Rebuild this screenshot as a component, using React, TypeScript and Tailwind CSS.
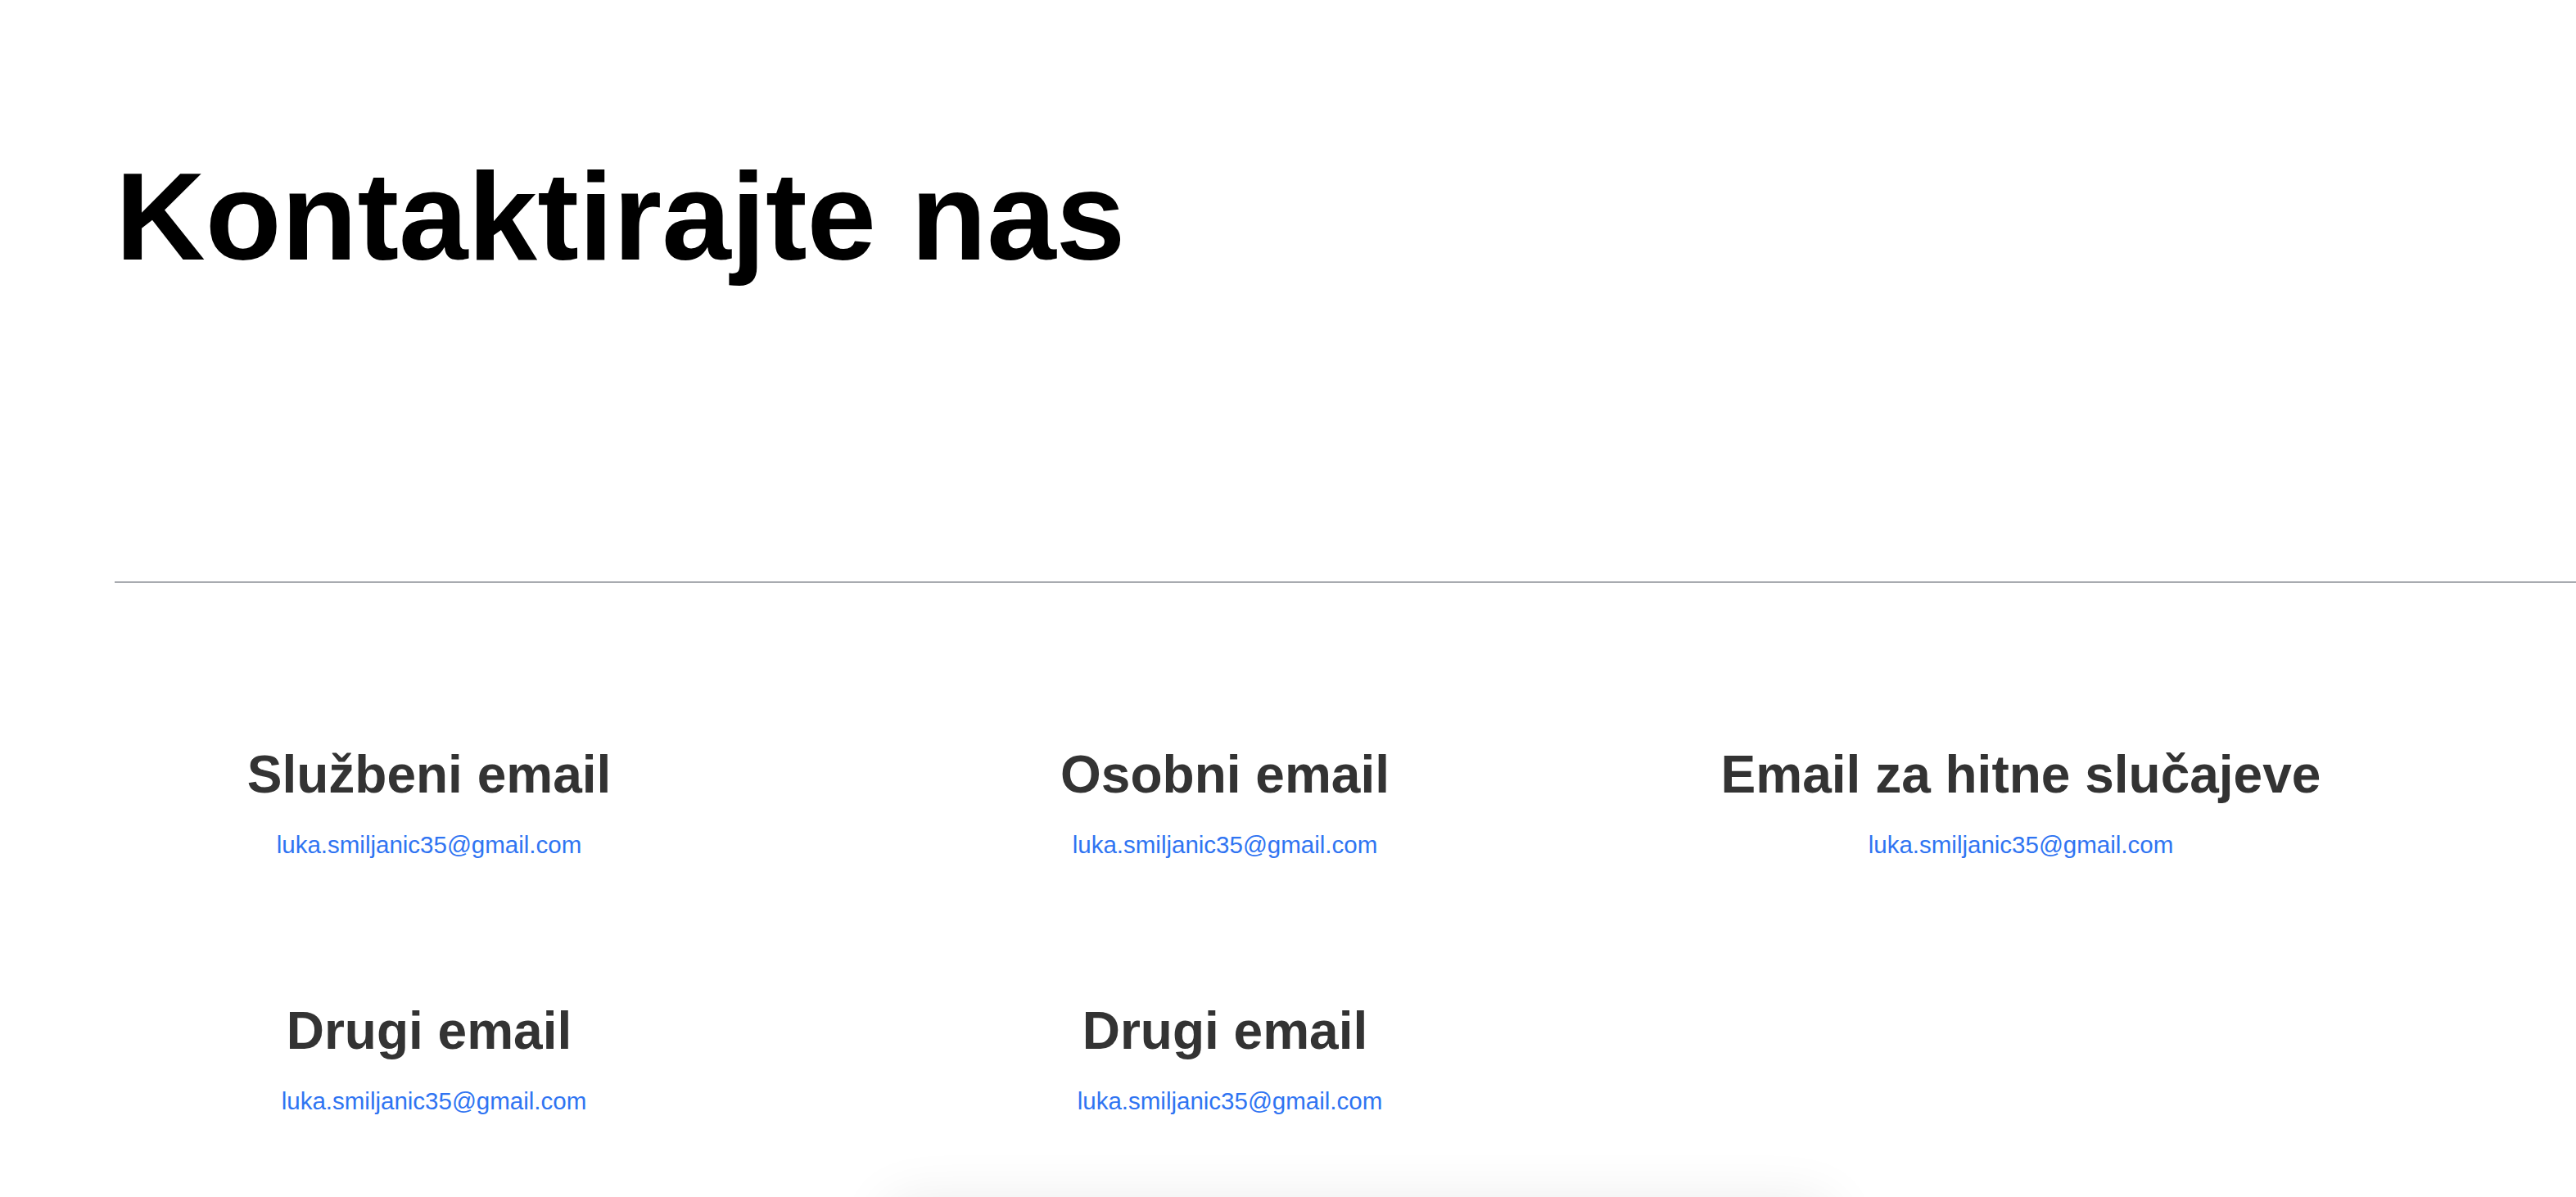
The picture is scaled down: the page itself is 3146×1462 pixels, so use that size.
const emails = [
  { title: 'Službeni email', address: 'luka.smiljanic35@gmail.com', shift: false },
  { title: 'Osobni email', address: 'luka.smiljanic35@gmail.com', shift: false },
  { title: 'Email za hitne slučajeve', address: 'luka.smiljanic35@gmail.com', shift: false },
  { title: 'Drugi email', address: 'luka.smiljanic35@gmail.com', shift: true },
  { title: 'Drugi email', address: 'luka.smiljanic35@gmail.com', shift: true },
];

function EmailCard({ title, address, shift }: { title: string; address: string; shift: boolean }) {
  return (
    <div className="flex flex-col items-center">
      <h2 className="text-[64px] font-bold leading-none text-[#333333]">{title}</h2>
      <a
        href={`mailto:${address}`}
        className={shift ? 'mt-[39px] pl-[12px] text-[29.5px] leading-none text-[#2f74f2]' : 'mt-[39px] text-[29.5px] leading-none text-[#2f74f2]'}
      >
        {address}
      </a>
    </div>
  );
}

export default function App() {
  return (
    <div className="min-h-screen overflow-hidden bg-white font-['Liberation_Sans',Arial,sans-serif]">
      <h1 className="pl-[141px] pt-[188px] text-[152px] font-bold leading-none text-black">
        Kontaktirajte nas
      </h1>

      <div className="ml-[140px] mt-[370px] h-[2px] bg-[#a8abb0]" />

      <section className="ml-[144px] mt-[202px] grid grid-cols-[repeat(3,760px)] gap-x-[212px] gap-y-[180px]">
        {emails.map((item, i) => (
          <EmailCard key={i} title={item.title} address={item.address} shift={item.shift} />
        ))}
      </section>

      {/* card below the fold, only its shadow shows */}
      <div className="ml-[1085px] mt-[110px] h-[300px] w-[1150px] rounded-2xl bg-white shadow-[0_0_70px_rgba(0,0,0,0.09)]" />
    </div>
  );
}
